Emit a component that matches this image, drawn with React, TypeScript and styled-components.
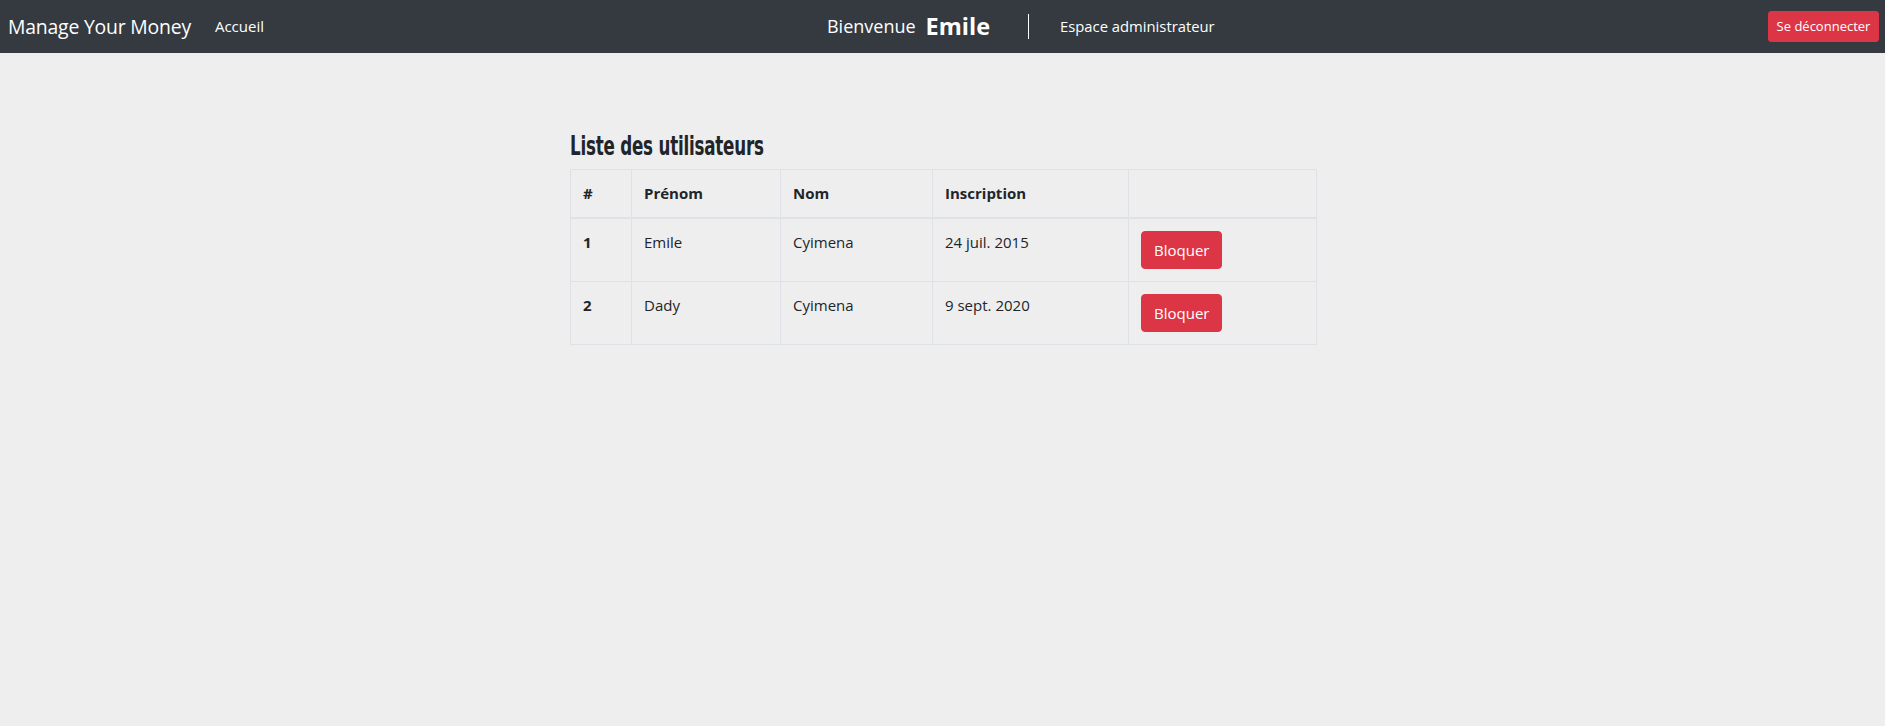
import React from "react";
import styled, { createGlobalStyle } from "styled-components";

const GlobalStyle = createGlobalStyle`
  html, body {
    margin: 0;
    padding: 0;
    background: #eeeeee;
    font-family: "Open Sans", "Noto Sans", sans-serif;
    font-size: 16px;
    line-height: 1.5;
    color: #212529;
  }
  * { box-sizing: border-box; }
`;

const NavBar = styled.nav`
  height: 53px;
  background: #343a40;
  display: flex;
  align-items: center;
  padding: 0 6px 0 8px;
  color: #fff;
`;

const Brand = styled.a`
  font-size: 19.4px;
  color: #fff;
  text-decoration: none;
  line-height: 30px;
  letter-spacing: -0.2px;
`;

const NavLink = styled.a`
  font-size: 15px;
  color: #fff;
  text-decoration: none;
  margin-left: 24px;
`;

const Center = styled.div`
  display: flex;
  align-items: center;
  margin-left: 563px;
`;

const Welcome = styled.span`
  font-size: 18px;
  color: #fff;
`;

const UserName = styled.strong`
  font-size: 23.5px;
  font-weight: 700;
  color: #fff;
  margin-left: 10px;
`;

const Divider = styled.span`
  width: 1px;
  height: 25px;
  background: #fff;
  margin-left: 38px;
`;

const AdminLink = styled(NavLink)`
  margin-left: 31px;
  font-size: 14.8px;
`;

const Button = styled.button<{ $small?: boolean }>`
  font-family: inherit;
  background: #dc3545;
  border: 1px solid #dc3545;
  color: #fff;
  cursor: pointer;
  border-radius: ${(p) => (p.$small ? "3px" : "4px")};
  font-size: ${(p) => (p.$small ? "13px" : "15px")};
  line-height: ${(p) => (p.$small ? "21px" : "24px")};
  padding: ${(p) => (p.$small ? "4px 8px" : "6px 12px")};
`;

const LogoutButton = styled(Button)`
  margin-left: auto;
  width: 111px;
  height: 31px;
  padding: 0;
`;

const Main = styled.main`
  width: 747px;
  margin: 0 auto;
  padding-top: 79px;
  transform: translateX(1px);
`;

const Title = styled.h4`
  margin: 0 0 8px;
  height: 29px;
  font-family: "DejaVu Sans Condensed", "Roboto", sans-serif;
  font-weight: 700;
  font-size: 26px;
  line-height: 29px;
  color: #212529;
  white-space: nowrap;
`;

const TitleText = styled.span`
  display: inline-block;
  transform: scaleX(0.715);
  transform-origin: left center;
  letter-spacing: -0.3px;
`;

const Table = styled.table`
  width: 747px;
  border-collapse: collapse;
  font-size: 15px;
`;

const Th = styled.th<{ $w?: number }>`
  text-align: left;
  vertical-align: bottom;
  font-weight: 700;
  padding: 12px;
  border: 1px solid #dee2e6;
  border-bottom: 2px solid #dee2e6;
  width: ${(p) => (p.$w ? `${p.$w}px` : "auto")};
`;

const Td = styled.td<{ $bold?: boolean }>`
  vertical-align: top;
  padding: 12px;
  border: 1px solid #dee2e6;
  font-weight: ${(p) => (p.$bold ? 700 : 400)};
`;

const users = [
  { id: 1, first: "Emile", last: "Cyimena", date: "24 juil. 2015" },
  { id: 2, first: "Dady", last: "Cyimena", date: "9 sept. 2020" },
];

export default function App() {
  return (
    <>
      <GlobalStyle />
      <NavBar>
        <Brand href="#">Manage Your Money</Brand>
        <NavLink href="#">Accueil</NavLink>
        <Center>
          <Welcome>Bienvenue</Welcome>
          <UserName>Emile</UserName>
          <Divider />
          <AdminLink href="#">Espace administrateur</AdminLink>
        </Center>
        <LogoutButton $small>Se déconnecter</LogoutButton>
      </NavBar>
      <Main>
        <Title>
          <TitleText>Liste des utilisateurs</TitleText>
        </Title>
        <Table>
          <thead>
            <tr>
              <Th $w={61}>#</Th>
              <Th $w={149}>Prénom</Th>
              <Th $w={152}>Nom</Th>
              <Th $w={196}>Inscription</Th>
              <Th />
            </tr>
          </thead>
          <tbody>
            {users.map((u) => (
              <tr key={u.id}>
                <Td $bold>{u.id}</Td>
                <Td>{u.first}</Td>
                <Td>{u.last}</Td>
                <Td>{u.date}</Td>
                <Td>
                  <Button>Bloquer</Button>
                </Td>
              </tr>
            ))}
          </tbody>
        </Table>
      </Main>
    </>
  );
}
